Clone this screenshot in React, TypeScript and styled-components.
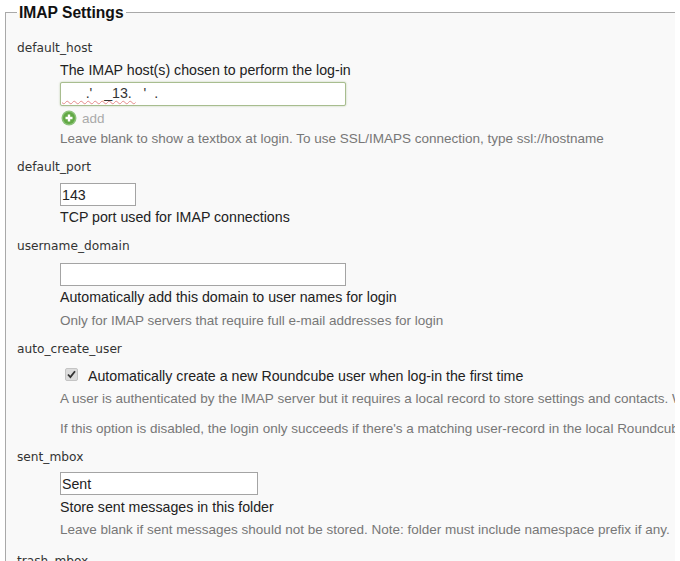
import React from 'react'
import styled, { createGlobalStyle } from 'styled-components'

const GlobalStyle = createGlobalStyle`
  html, body {
    margin: 0;
    height: 561px;
    overflow: hidden;
    background: #fff;
  }
`

const Page = styled.div`
  width: 675px;
  height: 561px;
  overflow: hidden;
  padding-top: 12px;
  box-sizing: border-box;
  font-family: "Liberation Sans", Arial, sans-serif;
`

const Panel = styled.section`
  position: relative;
  height: 549px;
  margin-left: 5px;
  box-sizing: border-box;
  background: #f9f9f9;
  border-top: 1px solid #a9a9a9;
  border-left: 1px solid #a9a9a9;
  padding: 25px 0 0 11px;
`

const Legend = styled.h2`
  position: absolute;
  top: -9px;
  left: 11px;
  margin: 0;
  padding: 0 2px;
  background: linear-gradient(#fff 9px, #f9f9f9 9px);
  font-size: 15.6px;
  line-height: 18px;
  font-weight: bold;
  color: #111;
`

const Settings = styled.dl`
  margin: 0;
  width: 700px;
`

const Name = styled.dt`
  height: 18px;
  box-sizing: border-box;
  padding-top: 1px;
  font-family: "DejaVu Sans", Verdana, sans-serif;
  font-size: 12.2px;
  line-height: 18px;
  color: #333;
`

const Detail = styled.dd<{ $height: number }>`
  margin: 0 0 0 43px;
  height: ${p => p.$height}px;
  display: flex;
  flex-direction: column;
  align-items: flex-start;
`

const Title = styled.div<{ $top?: number }>`
  height: 18px;
  margin-top: ${p => p.$top ?? 0}px;
  font-size: 14.2px;
  line-height: 18px;
  color: #222;
  white-space: nowrap;
`

const Hint = styled.div<{ $top?: number }>`
  height: 18px;
  box-sizing: border-box;
  padding-top: 1px;
  margin-top: ${p => p.$top ?? 0}px;
  font-size: 13.5px;
  line-height: 18px;
  color: #777;
  white-space: nowrap;
`

const TextInput = styled.input<{ $width: number; $top?: number }>`
  display: block;
  width: ${p => p.$width}px;
  height: 23px;
  margin-top: ${p => p.$top ?? 0}px;
  box-sizing: border-box;
  padding: 0 1px;
  font: 14.2px "Liberation Sans", Arial, sans-serif;
  color: #222;
  background: #fff;
  border: 1px solid #a4a4a4;
  border-radius: 0;
  outline: none;
`

const FocusedField = styled.div`
  width: 286px;
  height: 24px;
  box-sizing: border-box;
  margin-top: 3px;
  padding-left: 1px;
  background: #fff;
  border: 1px solid #a8bd8f;
  border-radius: 2px;
  box-shadow: 0 0 2px #b6c9a2;
  font-size: 14.2px;
  line-height: 21px;
  color: #333;
  white-space: pre;
`

const Masked = styled.span`
  text-decoration: underline wavy #e58a8a 1px;
  text-underline-offset: 2px;
`

const AddRow = styled.div`
  display: flex;
  align-items: center;
  gap: 5px;
  height: 18px;
  margin-top: 3px;
  padding-left: 1px;
  font-size: 13.5px;
  color: #aaa;
`

const CheckRow = styled.div`
  display: flex;
  align-items: center;
  height: 18px;
  margin-top: 10px;
  padding-left: 5px;
`

const CheckBox = styled.span`
  width: 13px;
  height: 13px;
  margin-right: 10px;
  margin-top: -3px;
  border-radius: 2px;
  background: #dcdcdc;
  border: 1px solid #c4c4c4;
  box-sizing: border-box;
  display: flex;
  align-items: center;
  justify-content: center;
`

const AddIcon = () => (
  <svg width="16" height="16" viewBox="0 0 16 16">
    <circle cx="8" cy="8" r="7.5" fill="#8cc27a" />
    <circle cx="8" cy="8" r="6" fill="#62a945" />
    <path d="M8 4.5v7M4.5 8h7" stroke="#fff" strokeWidth="2.4" />
  </svg>
)

const CheckMark = () => (
  <svg width="11" height="11" viewBox="0 0 11 11">
    <path d="M2 5.5l2.4 2.6L9 2.2" fill="none" stroke="#333" strokeWidth="1.8" />
  </svg>
)

export default function App() {
  return (
    <Page>
      <GlobalStyle />
      <Panel>
        <Legend>IMAP Settings</Legend>
        <Settings>
          <Name>default_host</Name>
          <Detail $height={101}>
            <Title $top={5}>The IMAP host(s) chosen to perform the log-in</Title>
            <FocusedField>
              <Masked>{"      .'   _13. "}</Masked>
              {"  '  ."}
            </FocusedField>
            <AddRow>
              <AddIcon />
              add
            </AddRow>
            <Hint $top={2}>Leave blank to show a textbox at login. To use SSL/IMAPS connection, type ssl://hostname</Hint>
          </Detail>

          <Name>default_port</Name>
          <Detail $height={61}>
            <TextInput $width={76} $top={8} defaultValue="143" />
            <Title $top={2}>TCP port used for IMAP connections</Title>
          </Detail>

          <Name>username_domain</Name>
          <Detail $height={85}>
            <TextInput $width={286} $top={9} />
            <Title $top={2}>Automatically add this domain to user names for login</Title>
            <Hint $top={5}>Only for IMAP servers that require full e-mail addresses for login</Hint>
          </Detail>

          <Name>auto_create_user</Name>
          <Detail $height={90}>
            <CheckRow>
              <CheckBox>
                <CheckMark />
              </CheckBox>
              <Title>Automatically create a new Roundcube user when log-in the first time</Title>
            </CheckRow>
            <Hint $top={4}>A user is authenticated by the IMAP server but it requires a local record to store settings and contacts. When</Hint>
            <Hint $top={12}>If this option is disabled, the login only succeeds if there's a matching user-record in the local Roundcube database</Hint>
          </Detail>

          <Name>sent_mbox</Name>
          <Detail $height={86}>
            <TextInput $width={198} $top={7} defaultValue="Sent" />
            <Title $top={3}>Store sent messages in this folder</Title>
            <Hint $top={4}>Leave blank if sent messages should not be stored. Note: folder must include namespace prefix if any.</Hint>
          </Detail>

          <Name>trash_mbox</Name>
        </Settings>
      </Panel>
    </Page>
  )
}
